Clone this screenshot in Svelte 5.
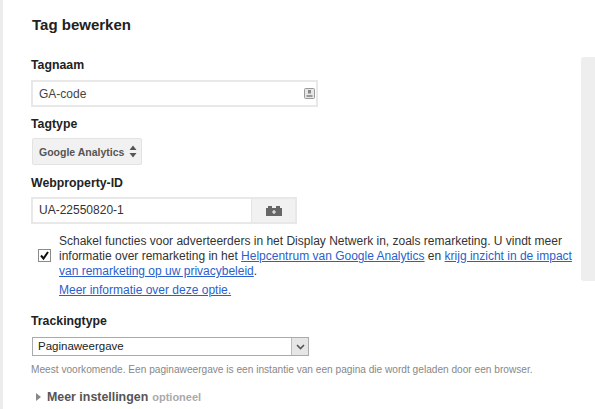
<script>
  const title = 'Tag bewerken';
</script>

<div class="page">
  <div class="strip"></div>
  <main class="main">
    <h1>{title}</h1>

    <div class="label first">Tagnaam</div>
    <div class="field name">
      <span class="val">GA-code</span>
      <svg class="ico" width="11" height="11" viewBox="0 0 11 11" aria-hidden="true">
        <rect x="0.5" y="0.5" width="10" height="10" rx="1" fill="#e6e6e6" stroke="#999"/>
        <rect x="4" y="2" width="3" height="3.5" fill="#888"/>
        <rect x="2.5" y="7" width="6" height="2" fill="#999"/>
      </svg>
    </div>

    <div class="label type">Tagtype</div>
    <div class="typebtn">
      <span>Google Analytics</span>
      <svg width="8" height="13" viewBox="0 0 8 13" aria-hidden="true">
        <path d="M4 0.5 L7.5 5 H0.5 Z M0.5 8 H7.5 L4 12.5 Z" fill="#555"/>
      </svg>
    </div>

    <div class="label web">Webproperty-ID</div>
    <div class="idrow">
      <div class="idinput">UA-22550820-1</div>
      <div class="idbtn">
        <svg width="16" height="10" viewBox="0 0 16 10" aria-hidden="true">
          <path d="M0 2H2V0H6V2H10V0H14V2H16V10H0Z" fill="#666"/>
          <path d="M8 4V8M6 6H10" stroke="#f1f1f1" stroke-width="1.2"/>
        </svg>
      </div>
    </div>

    <div class="check">
      <div class="box">
        <svg width="13" height="13" viewBox="0 0 13 13" aria-hidden="true">
          <rect x="0.5" y="0.5" width="12" height="12" fill="#fff" stroke="#8a8a8a"/>
          <path d="M3 6.5 L5.5 9.5 L10 3" fill="none" stroke="#111" stroke-width="2"/>
        </svg>
      </div>
      <div class="checktext">
        <p>Schakel functies voor adverteerders in het Display Netwerk in, zoals remarketing. U vindt meer informatie over remarketing in het <a href="#h">Helpcentrum van Google Analytics</a> en <a href="#k">krijg inzicht in de impact van remarketing op uw privacybeleid</a>.</p>
        <p class="more"><a href="#m">Meer informatie over deze optie.</a></p>
      </div>
    </div>

    <div class="label track">Trackingtype</div>
    <div class="select">
      <span class="selval">Paginaweergave</span>
      <span class="arrow">
        <svg width="9" height="6" viewBox="0 0 9 6" aria-hidden="true">
          <path d="M1 1 L4.5 4.5 L8 1" fill="none" stroke="#555" stroke-width="1.6"/>
        </svg>
      </span>
    </div>
    <p class="hint">Meest voorkomende. Een paginaweergave is een instantie van een pagina die wordt geladen door een browser.</p>

    <div class="disc">
      <svg width="5" height="8" viewBox="0 0 5 8" aria-hidden="true"><path d="M0 0 L5 4 L0 8Z" fill="#888"/></svg>
      <span class="mi">Meer instellingen</span>
      <span class="opt">optioneel</span>
    </div>
  </main>
  <aside class="side"><div class="panel"></div></aside>
</div>

<style>
  :global(body) { margin: 0; background: #fff; }
  .page {
    width: 595px; height: 409px; overflow: hidden; display: flex;
    font-family: "Liberation Sans", Arial, sans-serif; font-size: 12px; color: #222;
  }
  .strip { width: 3px; flex: none; background: #ececec; }
  .main { width: 578px; flex: none; box-sizing: border-box; padding: 16px 0 0 28px; }
  .side { flex: 1; padding-top: 57px; }
  .panel { height: 224px; background: #eee; border-radius: 3px 0 0 3px; }
  h1 { margin: 0; font-size: 15px; line-height: 18px; font-weight: bold; color: #222; padding-left: 1px; }
  .label { font-weight: bold; font-size: 12.3px; line-height: 16px; color: #222; }
  .first { margin-top: 23px; }
  .field {
    box-sizing: border-box; width: 287px; height: 27px; margin-top: 7px;
    border: 2px solid #e8e8e8; display: flex; align-items: center; justify-content: space-between;
    padding: 0 1px 0 6px;
  }
  .val, .idinput { font-size: 12px; color: #444; }
  .type { margin-top: 9px; }
  .typebtn {
    box-sizing: border-box; width: 110px; height: 27px; margin: 6px 0 0 1px;
    background: #f1f1f1; border: 1px solid #e3e3e3; border-radius: 2px;
    display: flex; align-items: center; justify-content: space-between; padding: 0 4px 0 6px;
    font-size: 10.5px; font-weight: bold; color: #555; white-space: nowrap;
  }
  .web { margin-top: 10px; }
  .idrow { display: flex; width: 266px; height: 27px; margin-top: 6px; box-sizing: border-box; border: 2px solid #e8e8e8; }
  .idinput { flex: 1; padding-left: 6px; line-height: 23px; color: #333; }
  .idbtn { width: 43px; background: #f1f1f1; border-left: 1px solid #e4e4e4; display: flex; align-items: center; justify-content: center; }
  .check { display: flex; margin-top: 10px; }
  .box { width: 28px; flex: none; padding: 15px 0 0 7px; box-sizing: border-box; }
  .checktext { width: 520px; }
  p { margin: 0; }
  .checktext p { line-height: 15px; font-size: 12px; color: #333; }
  .checktext .more { margin-top: 4px; }
  a { color: #2a5fcc; text-decoration: underline; }
  .track { margin-top: 15px; }
  .select {
    box-sizing: border-box; width: 277px; height: 19px; margin: 8px 0 0 1px;
    border: 1px solid #aaa; display: flex; align-items: stretch; justify-content: space-between;
  }
  .selval { padding-left: 5px; font-size: 11.5px; line-height: 17px; color: #222; }
  .arrow { width: 16px; background: #e6e6e6; border-left: 1px solid #bbb; display: flex; align-items: center; justify-content: center; }
  .hint { margin-top: 7px; font-size: 10.15px; line-height: 13px; color: #888; white-space: nowrap; }
  .disc { margin: 13px 0 0 5px; display: flex; align-items: center; gap: 6px; height: 16px; }
  .mi { font-weight: bold; font-size: 12.4px; color: #555; }
  .opt { font-size: 11px; font-weight: bold; color: #aaa; margin-left: -2px; }
</style>
